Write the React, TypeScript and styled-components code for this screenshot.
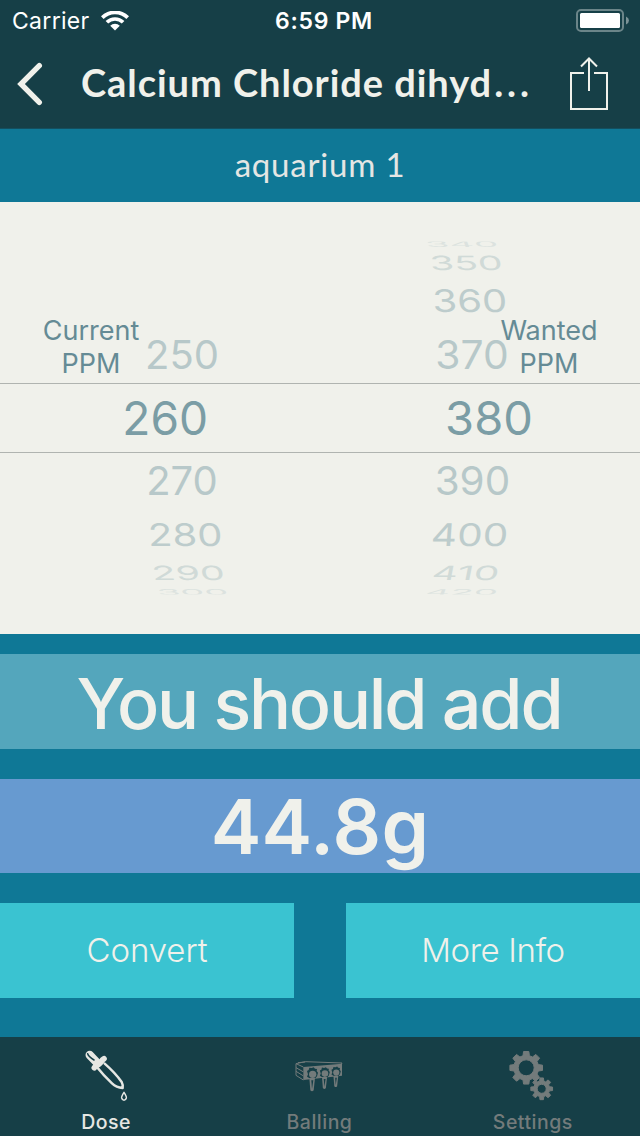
import React from 'react';
import styled, { createGlobalStyle } from 'styled-components';

const GlobalStyle = createGlobalStyle`
  * { box-sizing: border-box; }
  body { margin: 0; background: #0f7896; }
`;

const cream = '#f0f1eb';
const dark = '#163f47';
const teal = '#0f7896';

const Screen = styled.div`
  width: 640px;
  height: 1136px;
  display: flex;
  flex-direction: column;
  background: ${teal};
  color: ${cream};
  font-family: Inter, 'Liberation Sans', sans-serif;
  overflow: hidden;
`;

const StatusBar = styled.div`
  height: 40px;
  display: grid;
  grid-template-columns: 1fr auto 1fr;
  align-items: center;
  padding: 1px 11px 0 12px;
  background: ${dark};
  color: #fff;
  font-size: 23px;
`;

const Carrier = styled.div`
  display: flex;
  align-items: center;
  gap: 11px;
  letter-spacing: 0.3px;
`;

const Clock = styled.div`
  font-weight: 600;
  letter-spacing: 0.7px;
  padding-left: 7px;
`;

const BatterySlot = styled.div`
  display: flex;
  justify-content: flex-end;
`;

const NavBar = styled.div`
  height: 89px;
  display: flex;
  align-items: center;
  padding: 0 31px 0 17px;
  background: ${dark};
  border-bottom: 1px solid #134f5f;
`;

const Title = styled.h1`
  flex: 1;
  margin: 0;
  padding: 0 0 4px 38px;
  font: 700 38px/50px Lato, sans-serif;
  letter-spacing: 0.95px;
  white-space: nowrap;
`;

const Ellipsis = styled.span`
  letter-spacing: 3.9px;
  margin-left: 2px;
`;

const Subtitle = styled.div`
  height: 73px;
  padding-bottom: 4px;
  display: flex;
  align-items: center;
  justify-content: center;
  font: 400 33px/40px Lato, sans-serif;
  letter-spacing: 0.8px;
  color: #e4e6e4;
`;

const Picker = styled.div`
  position: relative;
  height: 432px;
  display: flex;
  align-items: center;
  background: ${cream};
  color: #7b9da5;
`;

const Wheel = styled.div`
  flex: 1;
  display: flex;
  flex-direction: column;
`;

const WheelRow = styled.div<{ $h: number; $selected?: boolean }>`
  height: ${p => p.$h}px;
  margin-top: ${p => (p.$selected ? '-1px' : '0')};
  display: flex;
  align-items: center;
  justify-content: center;
  border: solid #b0b4b0;
  border-width: ${p => (p.$selected ? '1px 0' : '0')};
`;

const EdgeRow = styled(WheelRow)<{ $bottom?: boolean }>`
  clip-path: inset(${p => (p.$bottom ? '0 0 4px 0' : '4px 0 0 0')});
`;

const WheelText = styled.span<{
  $size: number; $x: number; $sx: number; $sy: number; $skew: number; $o: number;
}>`
  font-size: ${p => p.$size}px;
  line-height: 40px;
  flex: none;
  opacity: ${p => p.$o};
  transform: translateX(${p => p.$x}px) skewX(${p => p.$skew}deg) scale(${p => p.$sx}, ${p => p.$sy});
`;

const PickerLabel = styled.div<{ $left: number }>`
  position: absolute;
  left: ${p => p.$left}px;
  top: 112px;
  width: 120px;
  text-align: center;
  font-size: 27px;
  line-height: 33px;
  color: #658b95;
`;

const Results = styled.div`
  flex: 1;
  display: flex;
  flex-direction: column;
  padding-top: 20px;
`;

const Band = styled.div<{ $bg: string; $h: number; $size: number; $weight: number; $ls: number }>`
  height: ${p => p.$h}px;
  margin-bottom: 30px;
  display: flex;
  align-items: center;
  justify-content: center;
  background: ${p => p.$bg};
  font-size: ${p => p.$size}px;
  font-weight: ${p => p.$weight};
  letter-spacing: ${p => p.$ls}px;
  white-space: nowrap;
`;

const MessageBand = styled(Band)`
  padding: 3px 2px 0 0;
`;

const Actions = styled.div`
  display: flex;
  gap: 52px;
`;

const ActionButton = styled.button<{ $ls?: number }>`
  flex: 1;
  height: 95px;
  border: 0;
  padding: 0 0 2px;
  background: #3ac3d1;
  color: ${cream};
  font: 350 33px Inter, sans-serif;
  letter-spacing: ${p => p.$ls ?? 0}px;
`;

const TabBar = styled.nav`
  height: 99px;
  display: flex;
  background: ${dark};
`;

const Tab = styled.div<{ $active?: boolean }>`
  flex: 1;
  display: flex;
  flex-direction: column;
  align-items: center;
  padding-top: 8px;
  color: ${p => (p.$active ? '#e6e7e3' : '#737b7b')};
`;

const TabIcon = styled.div<{ $top?: number }>`
  flex: none;
  height: 64px;
  padding-top: ${p => p.$top ?? 0}px;
  svg { display: block; }
`;

const TabLabel = styled.div`
  font-size: 19.5px;
  font-weight: 500;
  line-height: 26px;
  letter-spacing: 0.5px;
  margin-left: -1px;
`;

type Row = { v: number; x: number; w?: number; skew?: number };

const heights = [13, 25, 51, 57, 70, 57, 51, 25, 13];
const squash = [0.2, 0.49, 0.78, 1, 1, 1, 0.78, 0.49, 0.2];
const fades = [0.17, 0.27, 0.43, 0.48, 1, 0.48, 0.43, 0.27, 0.17];

const currentRows: (Row | null)[] = [
  null, null, null,
  { v: 250, x: 22 }, { v: 260, x: 5.5, w: 0.98 }, { v: 270, x: 22 },
  { v: 280, x: 25, skew: 3 }, { v: 290, x: 28, skew: 9, w: 0.98 }, { v: 300, x: 33, skew: 20, w: 0.95 },
];
const wantedRows: (Row | null)[] = [
  { v: 340, x: -18, skew: 20, w: 0.96 }, { v: 350, x: -14, skew: 8, w: 0.98 }, { v: 360, x: -10.5, skew: 3 },
  { v: 370, x: -8, w: 1.02 }, { v: 380, x: 9 }, { v: 390, x: -8, w: 1.01 },
  { v: 400, x: -10.5, skew: -4, w: 1.01 }, { v: 410, x: -14.5, skew: -11, w: 1.01 }, { v: 420, x: -18, skew: -20, w: 0.96 },
];

function PickerWheel({ rows }: { rows: (Row | null)[] }) {
  return (
    <Wheel>
      {rows.map((r, i) => {
        const RowBox = i === 0 || i === 8 ? EdgeRow : WheelRow;
        return (
          <RowBox key={i} $h={heights[i]} $selected={i === 4} {...(i === 8 ? { $bottom: true } : {})}>
            {r && (
              <WheelText
                $size={i === 4 ? 47 : 40}
                $x={r.x}
                $sx={r.w ?? 1}
                $sy={squash[i]}
                $skew={r.skew ?? 0}
                $o={fades[i]}
              >
                {r.v}
              </WheelText>
            )}
          </RowBox>
        );
      })}
    </Wheel>
  );
}

function Wifi() {
  return (
    <svg width="28" height="20" viewBox="0 0 28 20" fill="#fff">
      <path d="M0 5.2A20 20 0 0 1 28 5.2L25.4 7.9A16.2 16.2 0 0 0 2.6 7.9Z" />
      <path d="M4.6 10A13.4 13.4 0 0 1 23.4 10L20.8 12.6A9.7 9.7 0 0 0 7.2 12.6Z" />
      <path d="M14 19.5L9.2 14.7A6.8 6.8 0 0 1 18.8 14.7Z" />
    </svg>
  );
}

function Battery() {
  return (
    <svg width="53" height="23" viewBox="0 0 53 23">
      <rect x="1" y="1" width="46" height="21" rx="4" fill="none" stroke="#6b8589" strokeWidth="2" />
      <rect x="4" y="4" width="40" height="15" rx="1.5" fill="#fff" />
      <path d="M50 7.5Q53 9 53 11.5T50 15.5Z" fill="#7b9296" />
    </svg>
  );
}

function Back() {
  return (
    <svg width="26" height="44" viewBox="0 0 26 44" fill="none" stroke={cream} strokeWidth="5.4" strokeLinecap="round">
      <path d="M22.3 3.7L4 22L22.3 40.3" />
    </svg>
  );
}

function Share() {
  return (
    <svg width="40" height="54" viewBox="0 0 40 54" fill="none" stroke={cream} strokeWidth="2">
      <path d="M15 16H2V52H38V16H25M20 34V2M12 9.5L20 1.5L28 9.5" />
    </svg>
  );
}

function Dropper() {
  return (
    <svg width="52" height="60" viewBox="2 1 156 180" fill="none" stroke="currentColor" strokeLinecap="round" strokeLinejoin="round">
      <path d="M49 66Q68 90 95 116Q108 128 127 130Q129 122 124 112Q104 84 73 57" strokeWidth="7.5" />
      <path d="M28 31L52 56" strokeWidth="25" />
      <path d="M71 42L66 46Q60 58 46 64L42 69" strokeWidth="17" />
      <path d="M22 27Q25 36 41 46" stroke={dark} strokeWidth="4.5" />
      <path d="M131 143Q123 155 124 160Q126 167 131 167T138 160Q139 155 131 143Z" strokeWidth="4.5" />
    </svg>
  );
}

function Doser() {
  return (
    <svg width="60" height="48" viewBox="0 0 180 144" fill="currentColor">
      <path d="M40 51L156 41V77L40 90Z" />
      <path d="M18 41L46 35L156 39M18 41L40 51M156 39L154 43" fill="none" stroke="currentColor" strokeWidth="3" />
      <path d="M24 38L46 36M18 41V76L40 90M18 53L39 65M18 64L39 77" fill="none" stroke="currentColor" strokeWidth="3" />
      {[[67, 71, 1], [104, 69, 0.9], [138, 66, 0.85]].map(([x, y, s]) => (
        <g key={x} transform={`translate(${x} ${y}) scale(${s})`}>
          <path d="M-16 -8L-11 -11L-9 -18L-2 -17L4 -19L8 -15L14 -14L13 -8L17 -3L14 8L9 14H-8L-16 9L-13 2Z" fill={dark} />
          <circle cx="1" cy="2" r="11" />
          <path d="M-9 13L-6 50Q-1 56 4 50L8 13Z" />
          <path d="M-3 20L-1 46L3 20Z" fill={dark} />
        </g>
      ))}
    </svg>
  );
}

function gear(cx: number, cy: number, outer: number, inner: number, hole: number) {
  const pts: string[] = [];
  const n = 8;
  for (let i = 0; i < n; i++) {
    const a = (i * 2 * Math.PI) / n;
    [[-0.26, inner], [-0.16, outer], [0.16, outer], [0.26, inner]].forEach(([d, r]) => {
      pts.push(`${(cx + r * Math.cos(a + d)).toFixed(2)} ${(cy + r * Math.sin(a + d)).toFixed(2)}`);
    });
  }
  return `M${pts.join('L')}ZM${cx + hole} ${cy}A${hole} ${hole} 0 1 0 ${cx - hole} ${cy}A${hole} ${hole} 0 1 0 ${cx + hole} ${cy}Z`;
}

function Gears() {
  return (
    <svg width="50" height="58" viewBox="0 0 50 58" fill="currentColor" fillRule="evenodd" stroke="currentColor" strokeWidth="1" strokeLinejoin="round">
      <path d={gear(18.2, 22.8, 16.5, 12.5, 8)} />
      <path d={gear(33.7, 43.8, 11, 8, 4.5)} />
    </svg>
  );
}

export default function App() {
  return (
    <Screen>
      <GlobalStyle />
      <StatusBar>
        <Carrier>Carrier <Wifi /></Carrier>
        <Clock>6:59 PM</Clock>
        <BatterySlot><Battery /></BatterySlot>
      </StatusBar>
      <NavBar>
        <Back />
        <Title>Calcium Chloride dihyd<Ellipsis>...</Ellipsis></Title>
        <Share />
      </NavBar>
      <Subtitle>aquarium 1</Subtitle>
      <Picker>
        <PickerWheel rows={currentRows} />
        <PickerWheel rows={wantedRows} />
        <PickerLabel $left={31}>Current PPM</PickerLabel>
        <PickerLabel $left={489}>Wanted PPM</PickerLabel>
      </Picker>
      <Results>
        <MessageBand $bg="#54a6bc" $h={95} $size={70} $weight={500} $ls={-2.2}>You should add</MessageBand>
        <Band $bg="#679ad0" $h={94} $size={76} $weight={600} $ls={0.3}>44.8g</Band>
        <Actions>
          <ActionButton $ls={-0.1}>Convert</ActionButton>
          <ActionButton $ls={-0.4}>More Info</ActionButton>
        </Actions>
      </Results>
      <TabBar>
        <Tab $active><TabIcon><Dropper /></TabIcon><TabLabel>Dose</TabLabel></Tab>
        <Tab><TabIcon $top={5}><Doser /></TabIcon><TabLabel>Balling</TabLabel></Tab>
        <Tab><TabIcon><Gears /></TabIcon><TabLabel>Settings</TabLabel></Tab>
      </TabBar>
    </Screen>
  );
}
